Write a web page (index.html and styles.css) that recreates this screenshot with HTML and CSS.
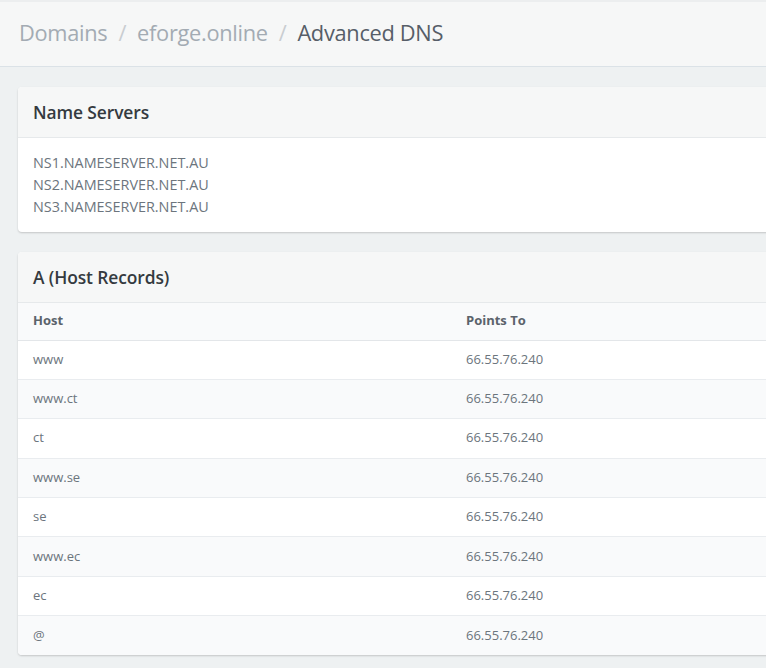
FILE: index.html
```html
<!DOCTYPE html>
<html>
<head>
<meta charset="utf-8">
<link rel="stylesheet" href="styles.css">
</head>
<body>
<header class="topbar">
  <nav class="crumbs">
    <span class="crumb">Domains</span><span class="sep">/</span><span class="crumb">eforge.online</span><span class="sep">/</span><span class="crumb current">Advanced DNS</span>
  </nav>
</header>
<main class="content">
  <section class="card">
    <div class="card-head">Name Servers</div>
    <div class="card-body ns">
      <div>NS1.NAMESERVER.NET.AU</div>
      <div>NS2.NAMESERVER.NET.AU</div>
      <div>NS3.NAMESERVER.NET.AU</div>
    </div>
  </section>
  <section class="card">
    <div class="card-head">A (Host Records)</div>
    <table class="records">
      <thead><tr><th>Host</th><th>Points To</th></tr></thead>
      <tbody>
        <tr><td>www</td><td>66.55.76.240</td></tr>
        <tr><td>www.ct</td><td>66.55.76.240</td></tr>
        <tr><td>ct</td><td>66.55.76.240</td></tr>
        <tr><td>www.se</td><td>66.55.76.240</td></tr>
        <tr><td>se</td><td>66.55.76.240</td></tr>
        <tr><td>www.ec</td><td>66.55.76.240</td></tr>
        <tr><td>ec</td><td>66.55.76.240</td></tr>
        <tr><td>@</td><td>66.55.76.240</td></tr>
      </tbody>
    </table>
  </section>
</main>
</body>
</html>
```
FILE: styles.css
```css
html, body {
  margin: 0;
  padding: 0;
  overflow: hidden;
}
body {
  background: #eef1f2;
  font-family: "Open Sans", "Noto Sans", sans-serif;
  color: #6c757d;
  width: 766px;
  height: 668px;
}
.topbar {
  background: #f6f7f7;
  border-top: 2px solid #eceeef;
  border-bottom: 1px solid #dbe2e7;
  box-sizing: border-box;
  height: 67px;
  display: flex;
  align-items: center;
  padding-left: 19px;
}
.crumbs {
  font-size: 21.8px;
  letter-spacing: -0.3px;
  color: #a3abb3;
  white-space: nowrap;
  margin-top: -4px;
}
.sep {
  color: #c9cdd1;
  margin: 0 11px;
}
.current {
  color: #565e68;
}
.content {
  padding: 20px 0 0 18px;
  display: flex;
  flex-direction: column;
  gap: 20px;
}
.card {
  width: 866px;
  background: #fff;
  border-radius: 4px;
  box-shadow: 0 1px 2px rgba(0,0,0,0.18);
  overflow: hidden;
}
.card-head {
  background: #f6f7f7;
  border-bottom: 1px solid #e6e9eb;
  height: 51px;
  box-sizing: border-box;
  display: flex;
  align-items: center;
  padding-left: 15px;
  font-size: 17.4px;
  font-weight: 600;
  color: #343a40;
  letter-spacing: -0.1px;
}
.card-body.ns {
  padding: 14px 15px 14px;
  font-size: 14.4px;
  line-height: 22px;
  color: #6c757d;
}
.records {
  width: 100%;
  border-collapse: collapse;
  table-layout: fixed;
  font-size: 13px;
}
.records th, .records td {
  text-align: left;
  padding: 0 15px 2px;
  height: 39.4px;
  box-sizing: border-box;
  border-bottom: 1px solid #e9ecef;
}
.records th {
  height: 37px;
  background: #f9fafb;
  color: #5b636b;
  font-weight: 700;
  border-bottom: 1px solid #e3e6e9;
}
.records td {
  color: #6c757d;
}
.records tbody tr:nth-child(even) td {
  background: #f9fafb;
}
.records tbody tr:last-child td {
  border-bottom: none;
}
```
